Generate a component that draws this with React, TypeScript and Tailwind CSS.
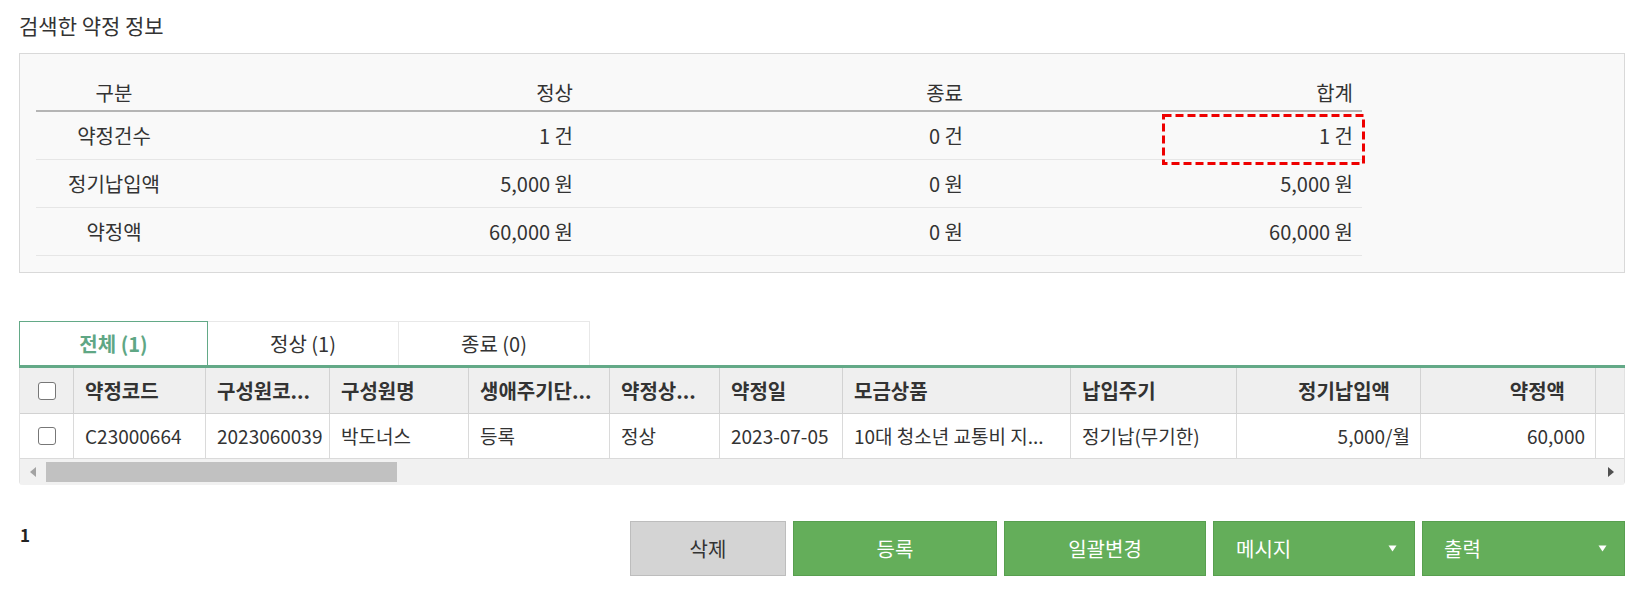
import React from 'react';

const font = { fontFamily: '"Noto Sans CJK KR", "Noto Sans", sans-serif' };

const summaryRows = [
  { label: '약정건수', normal: '1 건', ended: '0 건', total: '1 건', mark: true },
  { label: '정기납입액', normal: '5,000 원', ended: '0 원', total: '5,000 원' },
  { label: '약정액', normal: '60,000 원', ended: '0 원', total: '60,000 원' },
];

// grid columns: label, width, align
const columns = [
  { key: 'code', label: '약정코드', w: 'w-[132px]' },
  { key: 'member', label: '구성원코...', w: 'w-[124px]' },
  { key: 'name', label: '구성원명', w: 'w-[139px]' },
  { key: 'life', label: '생애주기단...', w: 'w-[141px]' },
  { key: 'status', label: '약정상...', w: 'w-[110px]' },
  { key: 'date', label: '약정일', w: 'w-[123px]' },
  { key: 'product', label: '모금상품', w: 'w-[228px]' },
  { key: 'cycle', label: '납입주기', w: 'w-[166px]' },
  { key: 'amount', label: '정기납입액', w: 'w-[184px]', right: true },
  { key: 'total', label: '약정액', w: 'w-[175px]', right: true },
  { key: 'extra', label: '', w: 'w-[120px]' },
];

const row: Record<string, string> = {
  code: 'C23000664',
  member: '2023060039',
  name: '박도너스',
  life: '등록',
  status: '정상',
  date: '2023-07-05',
  product: '10대 청소년 교통비 지...',
  cycle: '정기납(무기한)',
  amount: '5,000/월',
  total: '60,000',
  extra: '',
};

const Checkbox = () => (
  <span className="block w-[18px] h-[18px] rounded-[3px] border-[1.5px] border-[#777] bg-white" />
);

const Caret = () => (
  <svg width="9" height="7" viewBox="0 0 9 7" aria-hidden="true">
    <path d="M0.5 0.5 L8.5 0.5 L4.5 6.5 Z" fill="#ffffff" />
  </svg>
);

export default function App() {
  return (
    <div className="w-[1638px] h-[591px] bg-white pl-[19px] pr-[13px] pt-[10px] text-[#333]" style={font}>
      {/* Title */}
      <div className="h-[30px] leading-[30px] text-[21px] text-[#333]">검색한 약정 정보</div>

      {/* Summary box */}
      <div className="mt-[13px] border border-[#d9d9d9] bg-[#f9f9f9] pl-[16px] pt-[22px] pb-[16px]">
        <div className="w-[1326px] text-[20px]">
          <div className="grid grid-cols-[156px_1fr_1fr_1fr] h-[36px] items-center border-b-2 border-[#b5b5b5]">
            <div className="text-center">구분</div>
            <div className="text-right pr-[9px]">정상</div>
            <div className="text-right pr-[9px]">종료</div>
            <div className="text-right pr-[9px]">합계</div>
          </div>
          {summaryRows.map((r) => (
            <div
              key={r.label}
              className="grid grid-cols-[156px_1fr_1fr_1fr] h-[48px] items-center border-b border-[#e6e6e6]"
            >
              <div className="text-center">{r.label}</div>
              <div className="text-right pr-[9px]">{r.normal}</div>
              <div className="text-right pr-[9px]">{r.ended}</div>
              <div className="relative h-full flex items-center justify-end pr-[9px]">
                {r.total}
                {r.mark && (
                  <svg
                    className="absolute right-[-3px] top-[2px]"
                    width="203"
                    height="51"
                    viewBox="0 0 203 51"
                    aria-hidden="true"
                  >
                    <rect
                      x="1.5"
                      y="1.5"
                      width="200"
                      height="48"
                      fill="none"
                      stroke="#ee0000"
                      strokeWidth="3"
                      strokeDasharray="8 4"
                    />
                  </svg>
                )}
              </div>
            </div>
          ))}
        </div>
      </div>

      {/* Tabs */}
      <div className="mt-[48px] flex h-[44px] text-[20px]">
        <div className="w-[189px] flex items-center justify-center border border-b-0 border-[#63a987] font-bold text-[#5fa785]">
          전체 (1)
        </div>
        <div className="w-[191px] flex items-center justify-center border border-b-0 border-l-0 border-[#e8e8e8]">
          정상 (1)
        </div>
        <div className="w-[191px] flex items-center justify-center border border-b-0 border-l-0 border-[#e8e8e8]">
          종료 (0)
        </div>
      </div>
      <div className="h-[3px] bg-[#63a987]" />

      {/* Grid */}
      <div className="overflow-hidden rounded-b-[4px] border-x border-[#e2e2e2] text-[19px]">
        <div className="flex w-max text-[20px]">
          <div className="w-[54px] h-[46px] flex items-center justify-center bg-[#efefef] border-r border-b border-[#d2d2d2]">
            <Checkbox />
          </div>
          {columns.map((c) => (
            <div
              key={c.key}
              className={`${c.w} h-[46px] flex items-center bg-[#efefef] border-r border-b border-[#d2d2d2] font-bold whitespace-nowrap overflow-hidden ${
                c.right ? 'justify-end pr-[30px]' : 'pl-[11px]'
              }`}
            >
              {c.label}
            </div>
          ))}
        </div>
        <div className="flex w-max">
          <div className="w-[54px] h-[45px] flex items-center justify-center bg-white border-r border-b border-[#dadada]">
            <Checkbox />
          </div>
          {columns.map((c) => (
            <div
              key={c.key}
              className={`${c.w} h-[45px] flex items-center bg-white border-r border-b border-[#dadada] whitespace-nowrap overflow-hidden ${
                c.right ? 'justify-end pr-[10px]' : 'pl-[11px]'
              }`}
            >
              {row[c.key]}
            </div>
          ))}
        </div>
        {/* horizontal scrollbar */}
        <div className="h-[26px] bg-[#f1f1f1] flex items-center">
          <div className="w-[26px] flex justify-center">
            <svg width="6" height="10" viewBox="0 0 6 10" aria-hidden="true">
              <path d="M6 0 L0 5 L6 10 Z" fill="#a3a3a3" />
            </svg>
          </div>
          <div className="w-[351px] h-[20px] bg-[#c1c1c1]" />
          <div className="flex-1" />
          <div className="w-[26px] flex justify-center">
            <svg width="6" height="10" viewBox="0 0 6 10" aria-hidden="true">
              <path d="M0 0 L6 5 L0 10 Z" fill="#505050" />
            </svg>
          </div>
        </div>
      </div>

      {/* Footer */}
      <div className="mt-[36px] flex justify-between items-start">
        <div className="pl-[1px] pt-[1px] text-[17px] font-bold text-[#222]">1</div>
        <div className="flex gap-[7px] text-[20px]">
          <button
            type="button"
            className="w-[156px] h-[55px] bg-[#d4d4d4] border border-[#bdbdbd] text-[#333]"
          >
            삭제
          </button>
          <button
            type="button"
            className="w-[204px] h-[55px] bg-[#64ae5a] border border-[#589f4f] text-white"
          >
            등록
          </button>
          <button
            type="button"
            className="w-[202px] h-[55px] bg-[#64ae5a] border border-[#589f4f] text-white"
          >
            일괄변경
          </button>
          <button
            type="button"
            className="w-[202px] h-[55px] bg-[#64ae5a] border border-[#589f4f] text-white flex items-center justify-between pl-[22px] pr-[17px]"
          >
            <span>메시지</span>
            <Caret />
          </button>
          <button
            type="button"
            className="w-[203px] h-[55px] bg-[#64ae5a] border border-[#589f4f] text-white flex items-center justify-between pl-[21px] pr-[17px]"
          >
            <span>출력</span>
            <Caret />
          </button>
        </div>
      </div>
    </div>
  );
}
